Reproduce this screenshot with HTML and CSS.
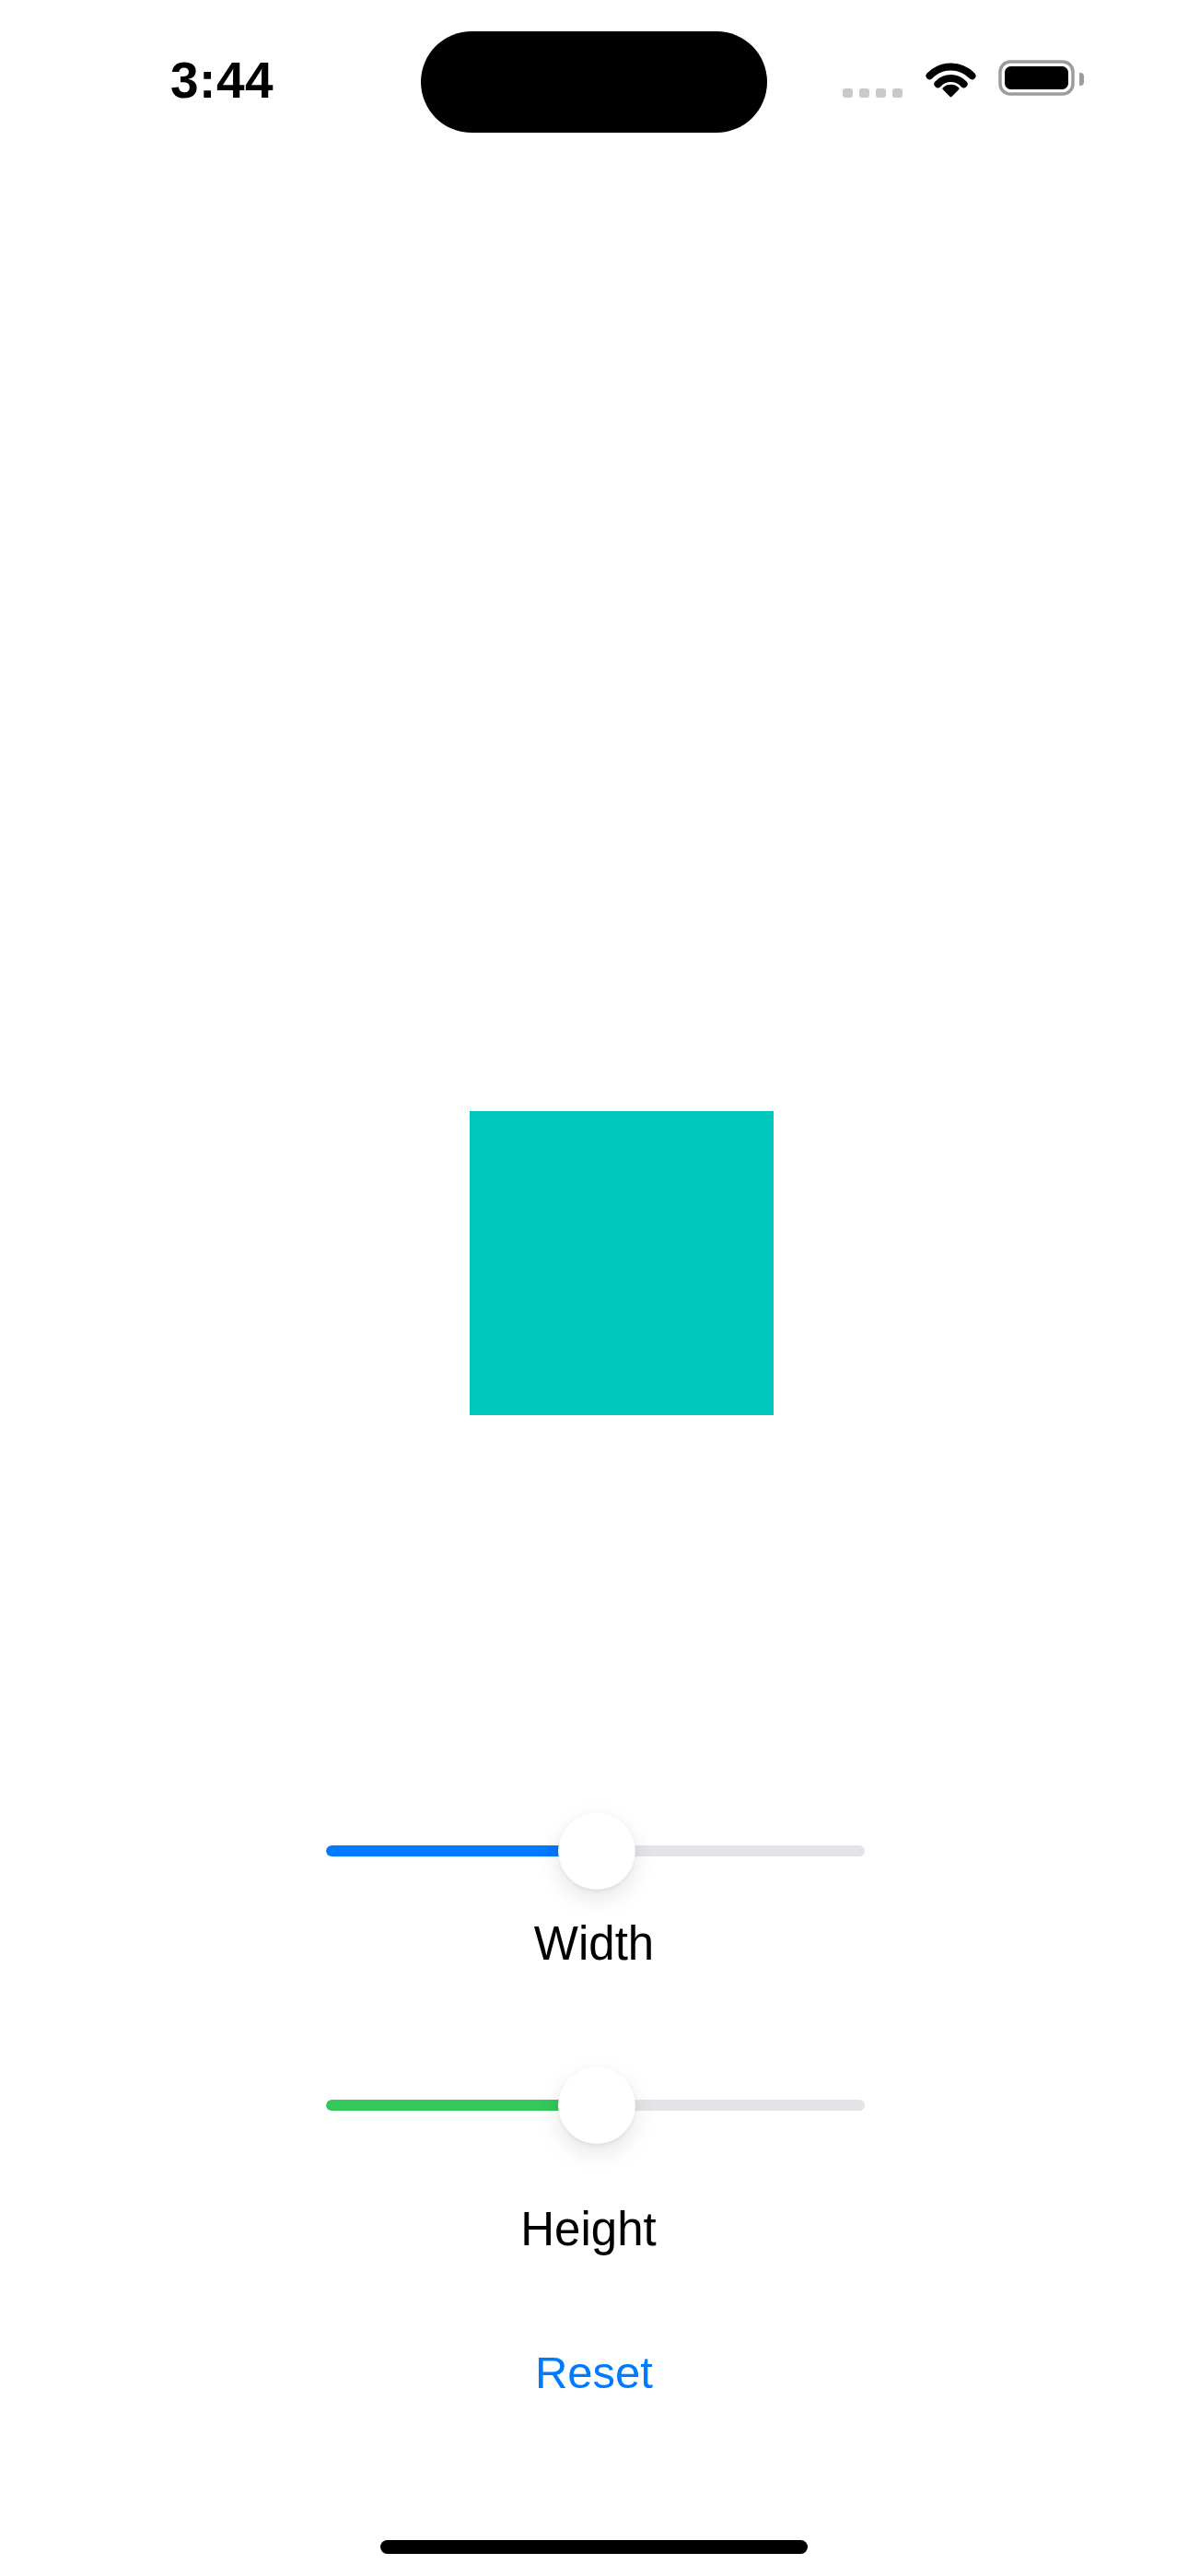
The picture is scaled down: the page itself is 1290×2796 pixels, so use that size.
FILE: index.html
```html
<!DOCTYPE html>
<html lang="en">
<head>
<meta charset="utf-8">
<title>Resize</title>
<link rel="stylesheet" href="styles.css">
</head>
<body>
<div class="screen">
  <div class="status">
    <div class="time-col"><span class="time">3:44</span></div>
    <div class="island"></div>
    <div class="icons">
      <div class="dots"><span></span><span></span><span></span><span></span></div>
      <svg class="wifi" width="59" height="40" viewBox="0 0 59 40">
        <path d="M6.5 16.3 A32 32 0 0 1 52.5 16.3" fill="none" stroke="#000" stroke-width="8" stroke-linecap="round"/>
        <path d="M15.4 25.3 A19 19 0 0 1 43.6 25.3" fill="none" stroke="#000" stroke-width="8" stroke-linecap="round"/>
        <path d="M29.5 38 L21.6 30.2 A11.5 11.5 0 0 1 37.4 30.2 Z" fill="#000" stroke="#000" stroke-width="2.5" stroke-linejoin="round"/>
      </svg>
      <svg class="battery" width="93" height="39" viewBox="0 0 93 39">
        <rect x="2" y="2" width="79" height="35" rx="11" fill="none" stroke="#9c9c9c" stroke-width="3.5"/>
        <rect x="7" y="7" width="69" height="25" rx="6.5" fill="#000"/>
        <path d="M88 14 h1 a4 4 0 0 1 4 4 v6 a4 4 0 0 1 -4 4 h-1 Z" fill="#9c9c9c"/>
      </svg>
    </div>
  </div>

  <div class="square"></div>

  <div class="slider slider-first">
    <div class="track">
      <div class="fill fill-blue" style="width: 294px"></div>
    </div>
    <div class="thumb" style="left: 252px"></div>
  </div>
  <div class="label label-width">Width</div>

  <div class="slider slider-second">
    <div class="track">
      <div class="fill fill-green" style="width: 294px"></div>
    </div>
    <div class="thumb" style="left: 252px"></div>
  </div>
  <div class="label label-height">Height</div>

  <div class="label reset">Reset</div>

  <div class="home-indicator"></div>
</div>
</body>
</html>
```

FILE: styles.css
```css
* { box-sizing: border-box; }

html, body {
  margin: 0;
  padding: 0;
  background: #ffffff;
}

.screen {
  width: 1290px;
  height: 2796px;
  display: flex;
  flex-direction: column;
  background: #ffffff;
  font-family: "Liberation Sans", Arial, sans-serif;
  color: #000;
  overflow: hidden;
}

.status {
  height: 150px;
  display: grid;
  grid-template-columns: 457px 376px 1fr;
  align-items: start;
}

.time-col {
  padding-left: 185px;
  padding-top: 60px;
}

.time {
  display: block;
  font-family: "Liberation Sans", Arial, sans-serif;
  font-weight: 700;
  font-size: 55px;
  line-height: 55px;
  letter-spacing: 0.5px;
}

.island {
  margin-top: 34px;
  width: 376px;
  height: 110px;
  border-radius: 55px;
  background: #000;
}

.icons {
  padding-left: 82px;
  padding-top: 65px;
  display: flex;
  align-items: flex-start;
}

.dots {
  display: flex;
  gap: 7px;
  margin-top: 31px;
}

.dots span {
  width: 11px;
  height: 10px;
  border-radius: 3px;
  background: #c9c9c9;
}

.wifi {
  display: block;
  margin-left: 23px;
  margin-top: 1px;
}

.battery {
  display: block;
  margin-left: 22px;
}

.square {
  margin-top: 1056px;
  margin-left: 510px;
  width: 330px;
  height: 330px;
  background: #00c7be;
}

.slider {
  position: relative;
  width: 585px;
  height: 84px;
  margin-left: 354px;
  display: flex;
  align-items: center;
}

.slider-first { margin-top: 431px; }
.slider-second { margin-top: 103px; }

.track {
  width: 100%;
  height: 12px;
  border-radius: 6px;
  background: #e3e3e8;
  overflow: hidden;
}

.fill {
  height: 100%;
  border-radius: 6px 0 0 6px;
}

.fill-blue { background: #007aff; }
.fill-green { background: #34c759; }

.thumb {
  position: absolute;
  top: 0;
  width: 84px;
  height: 84px;
  border-radius: 50%;
  background: #fff;
  box-shadow: 0 10px 26px rgba(0, 0, 0, 0.10), 0 2px 4px rgba(0, 0, 0, 0.06), 0 0 1px rgba(0, 0, 0, 0.06);
}

.label {
  text-align: center;
  font-size: 51px;
  line-height: 61px;
  height: 61px;
}

.label-width { margin-top: 28px; }

.label-height {
  margin-top: 62px;
  padding-right: 12px;
}

.reset {
  margin-top: 95px;
  font-size: 49px;
  color: #007aff;
}

.home-indicator {
  margin-top: 151px;
  align-self: center;
  width: 464px;
  height: 15px;
  border-radius: 8px;
  background: #000;
}
```
